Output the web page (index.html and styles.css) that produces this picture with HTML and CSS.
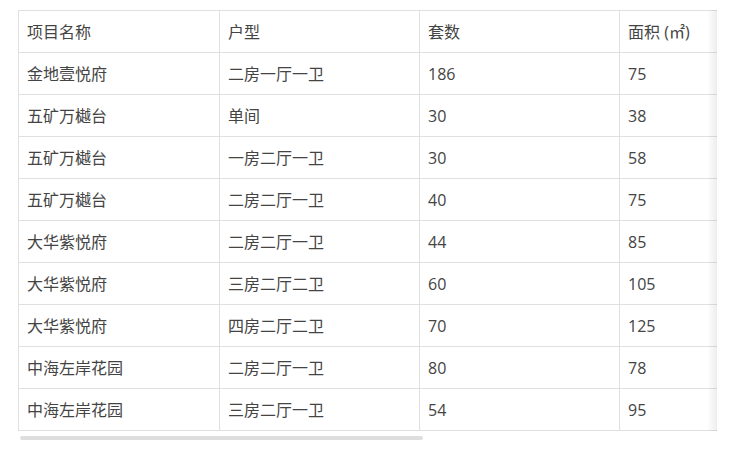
FILE: index.html
```html
<!DOCTYPE html>
<html lang="zh-CN">
<head>
<meta charset="utf-8">
<title>项目户型</title>
<link rel="stylesheet" href="styles.css">
</head>
<body>
<div class="table-box">
  <div class="table-scroll">
    <table class="data-table">
      <colgroup>
        <col class="col-first">
        <col class="col-mid">
        <col class="col-mid">
        <col>
      </colgroup>
      <thead>
        <tr><th>项目名称</th><th>户型</th><th>套数</th><th>面积 (㎡)</th></tr>
      </thead>
      <tbody>
        <tr><td>金地壹悦府</td><td>二房一厅一卫</td><td>186</td><td>75</td></tr>
        <tr><td>五矿万樾台</td><td>单间</td><td>30</td><td>38</td></tr>
        <tr><td>五矿万樾台</td><td>一房二厅一卫</td><td>30</td><td>58</td></tr>
        <tr><td>五矿万樾台</td><td>二房二厅一卫</td><td>40</td><td>75</td></tr>
        <tr><td>大华紫悦府</td><td>二房二厅一卫</td><td>44</td><td>85</td></tr>
        <tr><td>大华紫悦府</td><td>三房二厅二卫</td><td>60</td><td>105</td></tr>
        <tr><td>大华紫悦府</td><td>四房二厅二卫</td><td>70</td><td>125</td></tr>
        <tr><td>中海左岸花园</td><td>二房二厅一卫</td><td>80</td><td>78</td></tr>
        <tr><td>中海左岸花园</td><td>三房二厅一卫</td><td>54</td><td>95</td></tr>
      </tbody>
    </table>
  </div>
  <div class="scrollbar"><div class="scrollbar-thumb"></div></div>
</div>
</body>
</html>
```

FILE: styles.css
```css
html, body {
  margin: 0;
  padding: 0;
  background: #fff;
}
body {
  padding: 10px 16px 0 18px;
  font-family: "Open Sans", "Noto Sans CJK SC", sans-serif;
  color: #444;
}
.table-box {
  width: 699px;
}
.table-scroll {
  position: relative;
  overflow: hidden;
}
.table-scroll::after {
  content: "";
  position: absolute;
  top: 0;
  right: 0;
  bottom: 0;
  width: 10px;
  background: linear-gradient(to right, rgba(0,0,0,0), rgba(0,0,0,0.07));
}
.data-table {
  border-collapse: collapse;
  table-layout: fixed;
  width: 1201px;
  font-size: 16px;
}
.col-first {
  width: 201px;
}
.col-mid {
  width: 200px;
}
.data-table th,
.data-table td {
  border: 1px solid #e0e0e0;
  padding: 11px 8px 9px;
  line-height: 21px;
  text-align: left;
  font-weight: 400;
  white-space: nowrap;
}
.scrollbar {
  padding: 5px 2px 0;
}
.scrollbar-thumb {
  width: 403px;
  height: 4px;
  border-radius: 2px;
  background: #dedede;
}
```
